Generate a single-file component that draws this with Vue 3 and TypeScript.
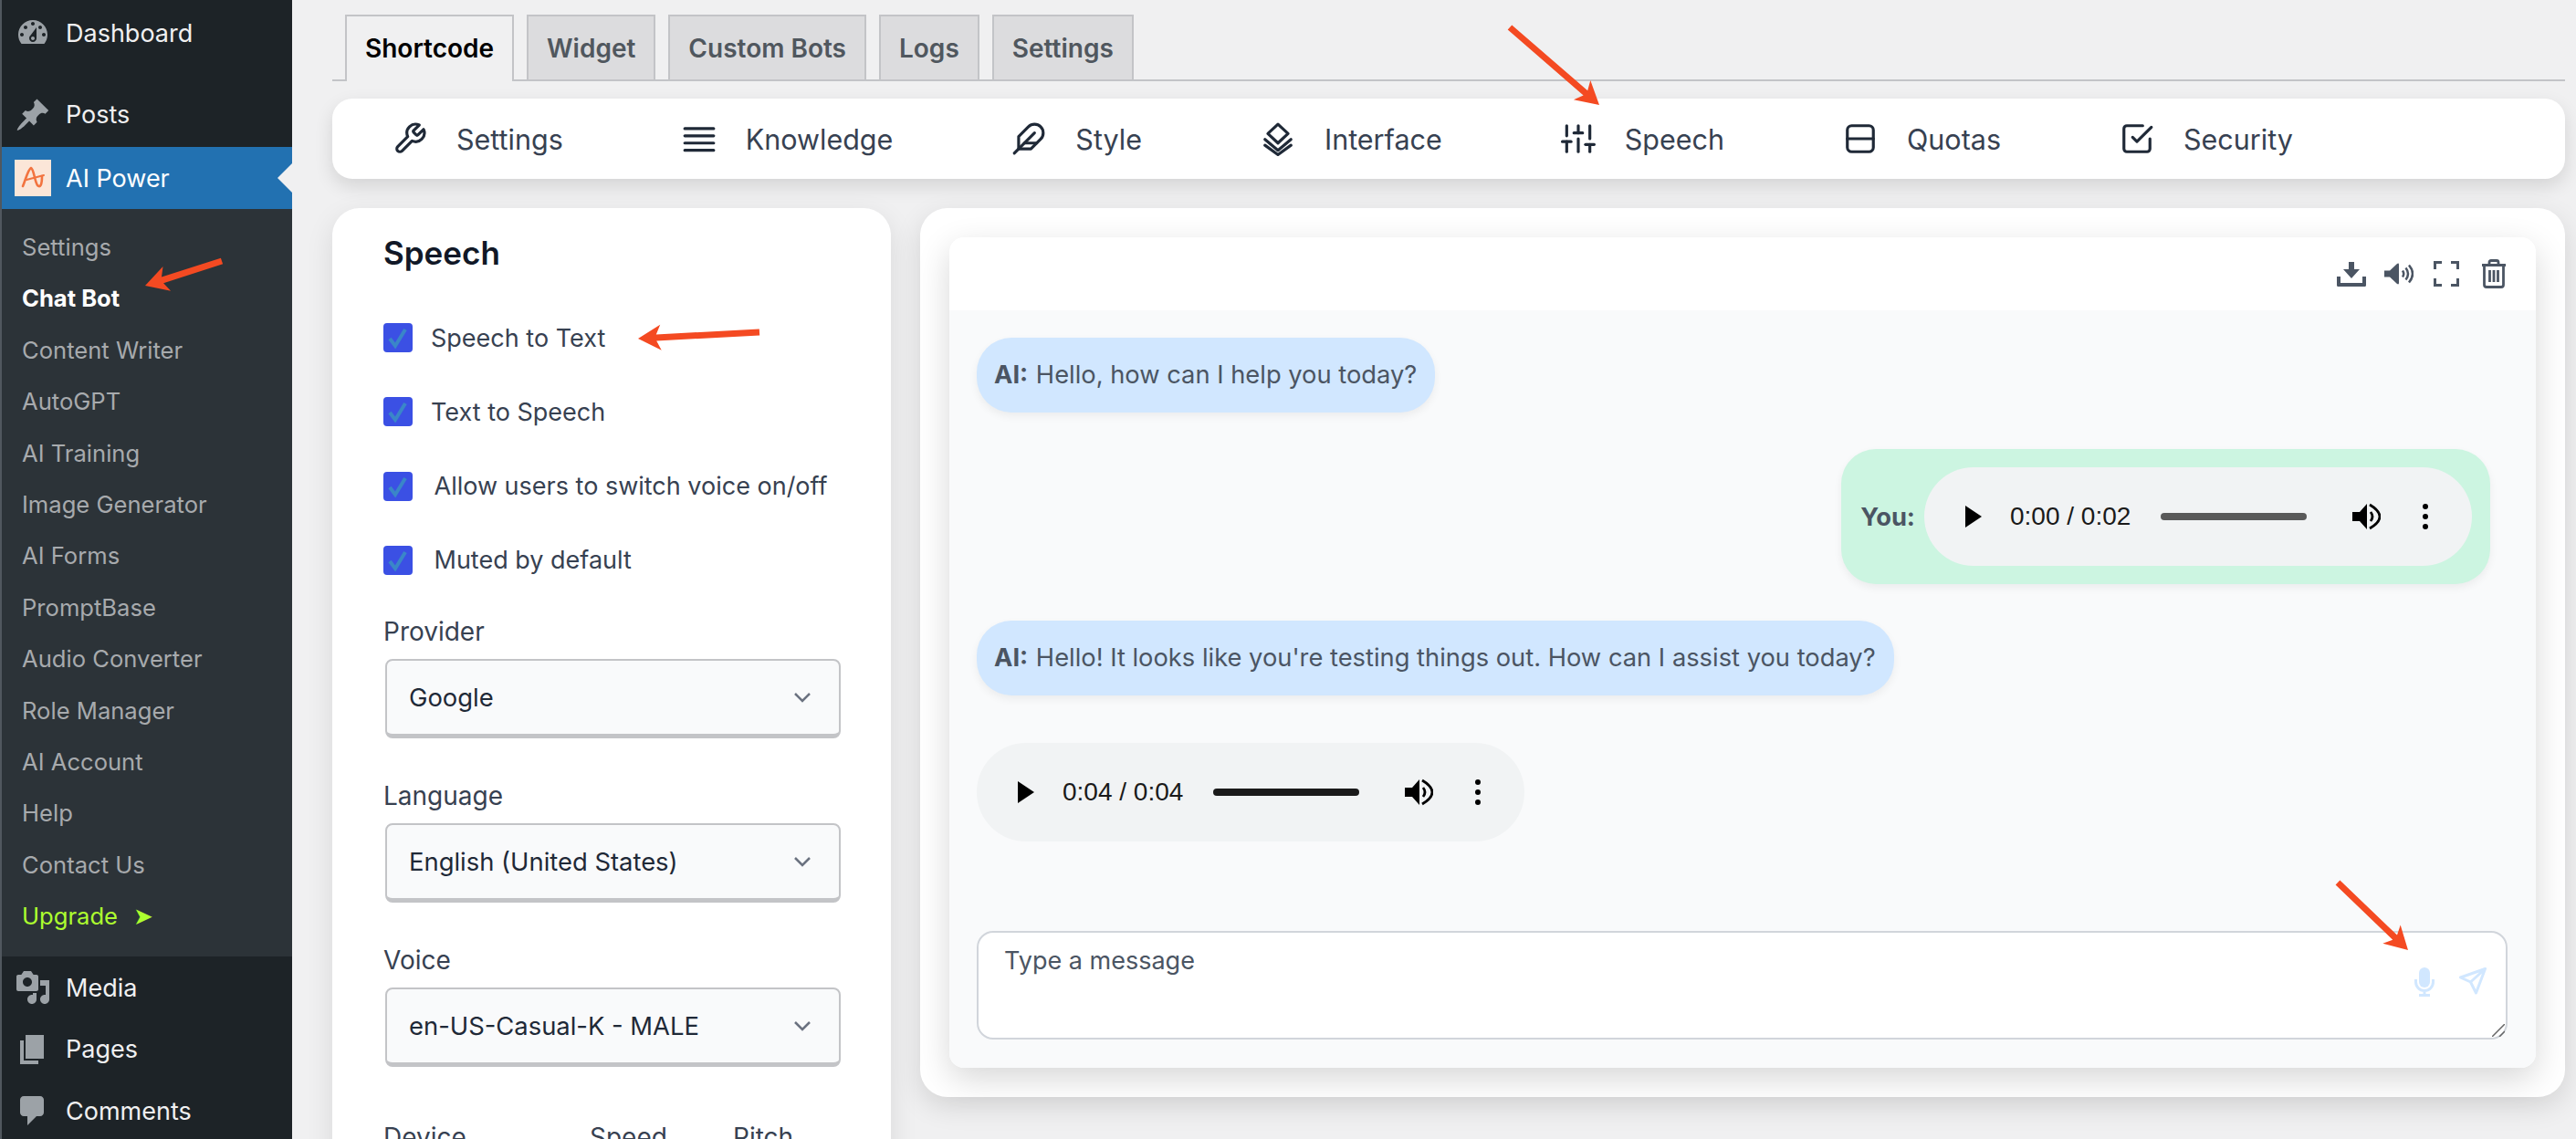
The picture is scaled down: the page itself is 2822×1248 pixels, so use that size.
<template>
  <div class="page">
    <aside class="sidebar">
      <div class="menu-item dashboard">
        <svg class="dash-icon" viewBox="0 0 20 20"><path :d="dashIcons.dashboard" /></svg>
        <span>Dashboard</span>
      </div>
      <div class="menu-item posts">
        <svg class="dash-icon" viewBox="0 0 20 20"><path :d="dashIcons.posts" /></svg>
        <span>Posts</span>
      </div>
      <div class="menu-item active">
        <svg class="dash-icon logo" viewBox="0 0 40 40">
          <rect width="40" height="40" fill="#fbe6d8" />
          <path d="M9 29C12 22 15 10 18 9C21 10 22 24 25 28C28 31 30 28 30 18" fill="none" stroke="#f27440" stroke-width="2.6" stroke-linecap="round" />
          <path d="M13 22L32 17" fill="none" stroke="#f27440" stroke-width="2" stroke-linecap="round" />
        </svg>
        <span>AI Power</span>
        <i class="notch"></i>
      </div>
      <ul class="submenu">
        <li v-for="item in subMenu" :key="item" :class="{ current: item === 'Chat Bot', upgrade: item === 'Upgrade' }">
          {{ item }}<span v-if="item === 'Upgrade'" class="upgrade-arrow">➤</span>
        </li>
      </ul>
      <div class="menu-item lower">
        <svg class="dash-icon" viewBox="0 0 20 20"><path :d="dashIcons.media" /></svg>
        <span>Media</span>
      </div>
      <div class="menu-item lower">
        <svg class="dash-icon" viewBox="0 0 20 20"><path :d="dashIcons.pages" /></svg>
        <span>Pages</span>
      </div>
      <div class="menu-item lower">
        <svg class="dash-icon" viewBox="0 0 20 20"><path :d="dashIcons.comments" /></svg>
        <span>Comments</span>
      </div>
    </aside>

    <main class="content">
      <div class="tabs">
        <div v-for="(tab, i) in tabs" :key="tab" class="tab" :class="{ selected: i === 0 }">{{ tab }}</div>
      </div>

      <nav class="section-nav">
        <div v-for="item in navItems" :key="item.label" class="nav-item">
          <svg class="nav-icon" viewBox="0 0 24 24">
            <path v-for="d in item.paths" :key="d" :d="d" />
          </svg>
          <span>{{ item.label }}</span>
        </div>
      </nav>

      <div class="panels">
        <section class="settings-panel">
          <h2>Speech</h2>
          <div class="checks">
            <label v-for="item in checks" :key="item.label" class="check-row" :class="{ wide: item.wide }">
              <span class="checkbox">
                <svg viewBox="0 0 32 32"><path d="M7 17l6 8L24 7" /></svg>
              </span>
              {{ item.label }}
            </label>
          </div>
          <div v-for="field in fields" :key="field.label" class="field">
            <div class="field-label">{{ field.label }}</div>
            <div class="select">
              <span>{{ field.value }}</span>
              <svg viewBox="0 0 20 12"><path d="M2 2l8 8 8-8" /></svg>
            </div>
          </div>
          <div class="triple">
            <span>Device</span>
            <span>Speed</span>
            <span>Pitch</span>
          </div>
        </section>

        <section class="preview-panel">
          <div class="chat-card">
            <header class="chat-head">
              <svg class="head-icon" width="32" height="27" viewBox="0 0 32 27">
                <path d="M13 0h6v8h6L16 18 7 8h6zM0 16h4v7h24v-7h4v9.500q0 1.500-1.500 1.500h-29Q0 27 0 25.500z" />
              </svg>
              <svg class="head-icon" width="32" height="24" viewBox="0 0 32 24">
                <path d="M0 8.500h6L14 1q2-1.200 2 1v20q0 2.200-2 1L6 15.500H0z" />
                <path class="wave" d="M20 8.500q2.500 3.500 0 7M23.500 5.500q5 6.500 0 13M27 2.500q8 9.500 0 19" />
              </svg>
              <svg class="head-icon gap-more" width="28" height="28" viewBox="0 0 28 28">
                <path class="corner" d="M1.500 9V1.500H9M19 1.500h7.500V9M26.500 19v7.500H19M9 26.500H1.500V19" />
              </svg>
              <svg class="head-icon gap-most" width="28" height="32" viewBox="0 0 28 32">
                <path class="corner thin" d="M1 6.500h26M9 6V3.500Q9 1.500 11 1.500h6Q19 1.500 19 3.500V6M3.500 7v21Q3.500 30.500 6 30.500h16Q24.500 30.500 24.500 28V7M9.500 12v13M14 12v13M18.500 12v13" />
              </svg>
            </header>

            <div class="chat-body">
              <div class="messages">
                <div class="bubble ai"><b>AI:</b> Hello, how can I help you today?</div>
                <div class="bubble you">
                  <b>You:</b>
                  <div class="audio">
                    <i class="play"></i>
                    <span class="time">0:00 / 0:02</span>
                    <i class="track grey"></i>
                    <svg class="speaker" viewBox="0 0 31 30"><path d="M0 10h8l8-9v28l-8-9H0z" /><path class="wave" d="M20 10q4 5 0 10M19 2q22 13 0 26" /></svg>
                    <i class="dots"></i>
                  </div>
                </div>
                <div class="bubble ai third"><b>AI:</b> Hello! It looks like you're testing things out. How can I assist you today?</div>
                <div class="audio">
                  <i class="play"></i>
                  <span class="time">0:04 / 0:04</span>
                  <i class="track"></i>
                  <svg class="speaker" viewBox="0 0 31 30"><path d="M0 10h8l8-9v28l-8-9H0z" /><path class="wave" d="M20 10q4 5 0 10M19 2q22 13 0 26" /></svg>
                  <i class="dots"></i>
                </div>
              </div>

              <div class="chat-input">
                <span class="placeholder">Type a message</span>
                <div class="input-icons">
                  <svg width="22" height="32" viewBox="0 0 22 32">
                    <rect x="5" y="0" width="12" height="22" rx="6" class="mic-fill" />
                    <path d="M1.500 13v3a9.500 9.500 0 0 0 19 0v-3M11 26v4M5 30.500h12" />
                  </svg>
                  <svg width="30" height="30" viewBox="0 0 30 30">
                    <path d="M28.500 1.500L1.500 11l11 5 6 12zM28.500 1.500L12.500 16" />
                  </svg>
                </div>
                <svg class="grip" viewBox="0 0 14 14"><path d="M0 14L14 0M8 14l6-6" /></svg>
              </div>
            </div>
          </div>
        </section>
      </div>
    </main>

    <!-- red annotation arrows drawn over the screenshot -->
    <svg class="annotations" width="2822" height="1248" viewBox="0 0 2822 1248">
      <polygon v-for="(a, i) in arrows" :key="i" :points="arrowPoints(a)" />
    </svg>
  </div>
</template>

<script setup lang="ts">
type Arrow = [number, number, number, number]

const dashIcons = {
  dashboard:
    'M3.76 16h12.48c1.1-1.37 1.76-3.11 1.76-5 0-4.42-3.58-8-8-8s-8 3.58-8 8c0 1.89.66 3.63 1.76 5zM10 4c.55 0 1 .45 1 1s-.45 1-1 1-1-.45-1-1 .45-1 1-1zM6 6c.55 0 1 .45 1 1s-.45 1-1 1-1-.45-1-1 .45-1 1-1zm8 0c.55 0 1 .45 1 1s-.45 1-1 1-1-.45-1-1 .45-1 1-1zm-5.37 5.55L12 7v6c0 1.1-.9 2-2 2s-2-.9-2-2c0-.57.24-1.08.63-1.45zM4 10c.55 0 1 .45 1 1s-.45 1-1 1-1-.45-1-1 .45-1 1-1zm12 0c.55 0 1 .45 1 1s-.45 1-1 1-1-.45-1-1 .45-1 1-1zm-5 3c0-.55-.45-1-1-1s-1 .45-1 1 .45 1 1 1 1-.45 1-1z',
  posts:
    'M10.44 3.02l1.82-1.82 6.36 6.35-1.83 1.82c-1.05-.68-2.48-.57-3.41.36l-.75.75c-.92.93-1.04 2.35-.35 3.41l-1.83 1.82-2.41-2.41-2.8 2.79c-.42.42-3.38 2.71-3.8 2.29s1.86-3.39 2.28-3.81l2.79-2.79L4.1 9.36l1.83-1.82c1.05.69 2.48.57 3.4-.36l.75-.75c.93-.92 1.05-2.35.36-3.41z',
  media:
    'M13 11V4c0-.55-.45-1-1-1h-1.67L9 1H5L3.67 3H2c-.55 0-1 .45-1 1v7c0 .55.45 1 1 1h10c.55 0 1-.45 1-1zM7 4.500c1.380 0 2.500 1.120 2.500 2.500S8.380 9.500 7 9.500 4.500 8.380 4.500 7 5.620 4.500 7 4.500zM14 6h5v10.500c0 1.380-1.120 2.500-2.500 2.500S14 17.880 14 16.500s1.120-2.500 2.500-2.500c.17 0 .34.02.5.05V9h-3V6zm-4 8.050V13h2v3.500c0 1.380-1.120 2.500-2.500 2.500S7 17.880 7 16.500 8.120 14 9.500 14c.17 0 .34.02.5.05z',
  pages: 'M6 15V2h10v13H6zm-1 1h8v2H3V5h2v11z',
  comments: 'M5 2h9c1.100 0 2 .9 2 2v7c0 1.100-.9 2-2 2h-2l-5 5v-5H5c-1.100 0-2-.9-2-2V4c0-1.100.9-2 2-2z',
}

const subMenu = [
  'Settings', 'Chat Bot', 'Content Writer', 'AutoGPT', 'AI Training', 'Image Generator', 'AI Forms',
  'PromptBase', 'Audio Converter', 'Role Manager', 'AI Account', 'Help', 'Contact Us', 'Upgrade',
]

const tabs = ['Shortcode', 'Widget', 'Custom Bots', 'Logs', 'Settings']

const navItems = [
  {
    label: 'Settings',
    paths: ['M14.700 6.300a1 1 0 0 0 0 1.400l1.600 1.600a1 1 0 0 0 1.400 0l3.770-3.770a6 6 0 0 1-7.940 7.940l-6.910 6.910a2.120 2.120 0 0 1-3-3l6.910-6.910a6 6 0 0 1 7.940-7.940l-3.760 3.760z'],
  },
  { label: 'Knowledge', paths: ['M2 5h20', 'M2 10h20', 'M2 15h20', 'M2 20h20'] },
  { label: 'Style', paths: ['M20.240 12.240a6 6 0 0 0-8.490-8.490L5 10.500V19h8.500z', 'M16 8L2 22', 'M17.500 15H9'] },
  { label: 'Interface', paths: ['M12 2l7 6.500-7 6.500-7-6.500z', 'M3 12.500l9 7.500 9-7.500', 'M3 16.500l9 6.500 9-6.500'] },
  {
    label: 'Speech',
    paths: ['M4 21v-7', 'M4 10V3', 'M12 21v-9', 'M12 8V3', 'M20 21v-5', 'M20 12V3', 'M1 14h6', 'M9 8h6', 'M17 16h6'],
  },
  { label: 'Quotas', paths: ['M6 3h12a3 3 0 0 1 3 3v12a3 3 0 0 1-3 3H6a3 3 0 0 1-3-3V6a3 3 0 0 1 3-3z', 'M3 12h18'] },
  { label: 'Security', paths: ['M9 11l3 3L22 4', 'M21 12v7a2 2 0 0 1-2 2H5a2 2 0 0 1-2-2V5a2 2 0 0 1 2-2h11'] },
]

const checks = [
  { label: 'Speech to Text', wide: false },
  { label: 'Text to Speech', wide: false },
  { label: 'Allow users to switch voice on/off', wide: true },
  { label: 'Muted by default', wide: true },
]

const fields = [
  { label: 'Provider', value: 'Google' },
  { label: 'Language', value: 'English (United States)' },
  { label: 'Voice', value: 'en-US-Casual-K - MALE' },
]

const arrows: Arrow[] = [
  [1654, 30, 1752, 115],
  [243, 286, 159, 313],
  [832, 364, 699, 371],
  [2561, 967, 2638, 1041],
]

// tail x,y to tip x,y, as one polygon with a notched head
function arrowPoints([x1, y1, x2, y2]: Arrow): string {
  const len = Math.hypot(x2 - x1, y2 - y1)
  const ux = (x2 - x1) / len
  const uy = (y2 - y1) / len
  const nx = -uy
  const ny = ux
  const at = (back: number, side: number) =>
    `${(x2 - ux * back + nx * side).toFixed(1)},${(y2 - uy * back + ny * side).toFixed(1)}`
  return [
    at(len, 3.5), at(20, 3.5), at(25, 14), at(0, 0), at(25, -14), at(20, -3.500), at(len, -3.500),
  ].join(' ')
}
</script>

<style>
html,
body {
  margin: 0;
  background: #f0f0f1;
}
</style>

<style scoped>
.page {
  position: relative;
  display: flex;
  width: 2822px;
  height: 1248px;
  overflow: hidden;
  background: #f0f0f1;
  font-family: Inter, "Liberation Sans", sans-serif;
  color: #374151;
}

.sidebar {
  flex: 0 0 320px;
  box-sizing: border-box;
  border-left: 2px solid #50575e;
  background: #1d2327;
  color: #f0f0f1;
}

.menu-item {
  position: relative;
  display: flex;
  align-items: center;
  gap: 16px;
  padding-left: 14px;
  font-size: 27px;
}

.dashboard { height: 72px; margin-bottom: 18px; }
.posts { height: 71px; }
.lower { height: 67.500px; }

.active {
  height: 68px;
  background: #2271b1;
  color: #fff;
}

.notch {
  position: absolute;
  right: 0;
  top: 18px;
  border: 16px solid transparent;
  border-right-color: #f0f0f1;
  border-left-width: 0;
}

.dash-icon {
  flex: none;
  width: 40px;
  height: 40px;
  fill: #9ca2a7;
}

.logo { fill: none; }

.submenu {
  margin: 0;
  padding: 14px 0 16px;
  list-style: none;
  background: #2c3338;
}

.submenu li {
  height: 56.400px;
  padding-left: 22px;
  font-size: 25.600px;
  line-height: 56.400px;
  color: #a7aaad;
  white-space: nowrap;
}

.submenu li.current {
  color: #fff;
  font-weight: 700;
}

.submenu li.upgrade { color: #adff2f; }

.upgrade-arrow {
  margin-left: 17px;
  font-family: "DejaVu Sans", sans-serif;
  font-size: 26px;
  line-height: 1;
}

.content {
  flex: 1;
  min-width: 0;
  padding: 16px 12px 0 44px;
}

.tabs {
  display: flex;
  gap: 14px;
  height: 71px;
  padding-left: 14px;
  border-bottom: 2px solid #c3c4c7;
}

.tab {
  box-sizing: border-box;
  height: 71px;
  padding: 0 20px;
  border: 2px solid #c3c4c7;
  border-bottom: 0;
  background: #dcdcde;
  color: #50575e;
  font-size: 28px;
  font-weight: 600;
  line-height: 70px;
}

.tab.selected {
  height: 73px;
  background: #f0f0f1;
  color: #000;
}

.section-nav {
  display: flex;
  align-items: center;
  gap: 130px;
  height: 88px;
  margin-top: 19px;
  padding-left: 66px;
  border-radius: 22px;
  background: #fff;
  box-shadow: 0 8px 20px rgba(0, 0, 0, 0.12);
}

.nav-item {
  display: flex;
  align-items: center;
  gap: 32px;
  font-size: 30.500px;
  color: #374151;
}

.nav-icon {
  width: 38px;
  height: 38px;
  fill: none;
  stroke: #1f2937;
  stroke-width: 2;
  stroke-linecap: round;
  stroke-linejoin: round;
}

.panels {
  display: grid;
  grid-template-columns: 612px 1802px;
  gap: 32px;
  margin-top: 32px;
}

.settings-panel {
  height: 1100px;
  box-sizing: border-box;
  padding: 27px 54px 0 56px;
  border-radius: 30px;
  background: #fff;
  box-shadow: 0 10px 30px rgba(0, 0, 0, 0.1);
}

h2 {
  margin: 0 0 55px;
  font-size: 35px;
  font-weight: 600;
  line-height: 44px;
  color: #111827;
}

.checks {
  display: flex;
  flex-direction: column;
  gap: 49.300px;
  margin-bottom: 45px;
}

.check-row {
  display: flex;
  align-items: center;
  gap: 20px;
  height: 32px;
  font-size: 27px;
  white-space: nowrap;
}

.check-row.wide { gap: 23.500px; }

.checkbox {
  flex: none;
  width: 32px;
  height: 32px;
  border-radius: 4px;
  background: #3b50e4;
}

.checkbox svg {
  display: block;
  fill: none;
  stroke: #3a86c8;
  stroke-width: 4;
}

.field { margin-bottom: 46px; }

.field-label {
  margin-bottom: 13px;
  font-size: 28px;
  line-height: 34px;
}

.select {
  display: flex;
  align-items: center;
  justify-content: space-between;
  box-sizing: border-box;
  width: 499px;
  height: 87px;
  margin-left: 2px;
  padding: 0 30px 0 24px;
  border: 2px solid #c3c4c7;
  border-bottom-width: 5px;
  border-radius: 8px;
  background: #f9fafb;
  color: #1f2937;
  font-size: 27.400px;
}

.select svg {
  width: 20px;
  height: 12px;
  fill: none;
  stroke: #6b7280;
  stroke-width: 2.500;
}

.triple {
  display: grid;
  grid-template-columns: 226px 157px 1fr;
  margin-top: 60px;
  font-size: 28px;
  line-height: 34px;
}

.preview-panel {
  height: 974px;
  box-sizing: border-box;
  padding: 32px;
  border-radius: 30px;
  background: #fff;
  box-shadow: 0 10px 30px rgba(0, 0, 0, 0.12);
}

.chat-card {
  display: flex;
  flex-direction: column;
  height: 910px;
  border-radius: 16px;
  overflow: hidden;
  box-shadow: 0 12px 36px rgba(0, 0, 0, 0.16);
}

.chat-head {
  display: flex;
  align-items: center;
  justify-content: flex-end;
  gap: 20px;
  flex: none;
  height: 80px;
  padding-right: 32px;
  background: #fff;
  box-shadow: 0 2px 6px rgba(0, 0, 0, 0.05);
}

.head-icon { fill: #4b5563; }
.head-icon.gap-more { margin-left: 2px; }
.head-icon.gap-most { margin-left: 4px; }

.head-icon .wave,
.head-icon .corner {
  fill: none;
  stroke: #4b5563;
  stroke-width: 3px;
}

.head-icon .wave { stroke-width: 2.500px; }
.head-icon .corner.thin { stroke-width: 2.800px; }

.chat-body {
  display: flex;
  flex: 1;
  flex-direction: column;
  box-sizing: border-box;
  padding: 30px 31px 31px 30px;
  background: #f9fafb;
}

.messages {
  display: flex;
  flex: 1;
  flex-direction: column;
  align-items: flex-start;
  gap: 40px;
  padding-right: 19px;
}

.bubble {
  border-radius: 38px;
  background: #d1e7ff;
  box-shadow: 0 4px 10px rgba(0, 0, 0, 0.06);
  font-size: 27.300px;
  color: #4b5563;
}

.bubble.ai {
  height: 82px;
  padding: 0 20px 0 19px;
  line-height: 82px;
}

.bubble.third { margin-bottom: 12px; }

.bubble b {
  margin-right: 1px;
  font-weight: 700;
}

.bubble.you {
  display: flex;
  align-items: center;
  gap: 9px;
  align-self: flex-end;
  height: 148px;
  padding: 0 20px 0 21px;
  background: #ccf5e1;
}

.audio {
  display: flex;
  align-items: center;
  flex: none;
  width: 600px;
  height: 108px;
  box-sizing: border-box;
  padding-left: 45px;
  border-radius: 54px;
  background: #f1f3f4;
}

.play {
  flex: none;
  width: 0;
  height: 0;
  border-left: 18px solid #000;
  border-top: 12px solid transparent;
  border-bottom: 12px solid transparent;
}

.time {
  width: 132px;
  margin: 0 33px 0 31px;
  font-family: "Liberation Sans", Arial, sans-serif;
  font-size: 28px;
  color: #1a1a1a;
  white-space: nowrap;
}

.track {
  flex: none;
  width: 160px;
  height: 8px;
  border-radius: 4px;
  background: #1a1a1a;
}

.track.grey { background: #595959; }

.speaker {
  flex: none;
  width: 31px;
  height: 30px;
  margin: 0 46px 0 50px;
  fill: #000;
}

.speaker .wave {
  fill: none;
  stroke: #000;
  stroke-width: 2.800px;
}

.dots {
  flex: none;
  width: 6px;
  height: 6px;
  border-radius: 50%;
  background: #000;
  box-shadow: 0 -11px 0 #000, 0 11px 0 #000;
}

.chat-input {
  position: relative;
  display: flex;
  justify-content: space-between;
  flex: none;
  height: 119px;
  box-sizing: border-box;
  border: 2px solid #d1d5db;
  border-radius: 18px;
  background: #fff;
}

.placeholder {
  padding: 14px 28px;
  font-size: 27px;
  line-height: 34px;
  color: #4b5563;
}

.input-icons {
  display: flex;
  align-items: flex-start;
  gap: 27px;
  padding: 38px 21px 0 0;
}

.input-icons svg {
  fill: none;
  stroke: #d1e7ff;
  stroke-width: 3;
  stroke-linejoin: round;
}

.input-icons .mic-fill {
  fill: #d1e7ff;
  stroke: none;
}

.grip {
  position: absolute;
  right: 1px;
  bottom: 1px;
  width: 14px;
  height: 14px;
  fill: none;
  stroke: #666;
  stroke-width: 1.500;
}

.annotations {
  position: absolute;
  left: 0;
  top: 0;
  pointer-events: none;
  fill: #f44a22;
}
</style>
